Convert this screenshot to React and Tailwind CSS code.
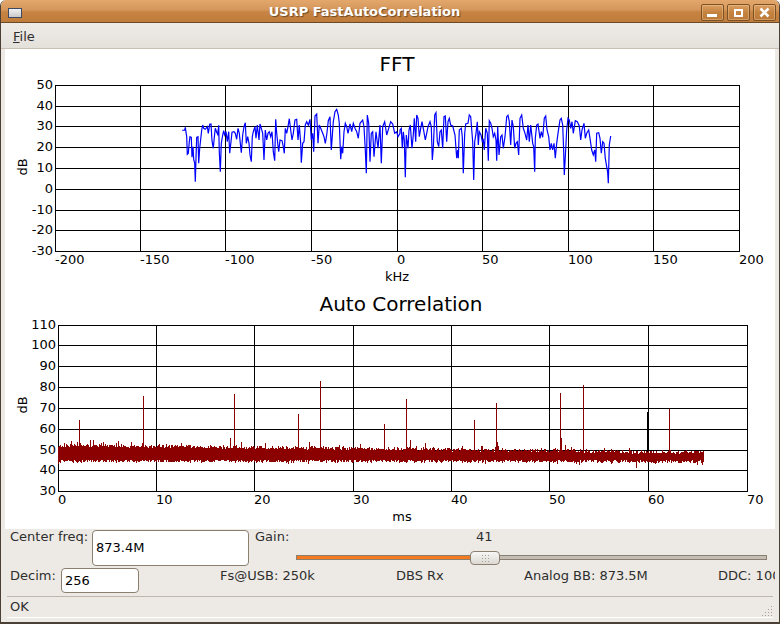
import React from "react";

// traced from the reference, in 3x crop coordinates
const fftA = [[37,91],[44,90],[46,82],[50,110],[52,163],[55,160],[58,125],[60,110],[64,112],[66,172],[69,140],[71,178],[74,190],[76,245],[78,175],[80,112],[84,110],[86,190],[89,145],[92,118],[95,90],[98,75],[101,85],[106,88],[112,80],[115,100],[119,73],[123,72],[126,122],[130,145],[133,112],[136,85],[140,97],[143,103],[146,76],[148,156],[151,215],[154,130],[158,105],[161,92],[164,105],[168,95],[172,125],[176,95],[179,160],[183,125],[186,97],[192,95],[196,100],[200,118],[204,85],[208,100],[211,130],[214,158],[218,105],[222,80],[226,68],[229,130],[233,110],[237,130],[240,165],[244,185],[247,110],[250,95],[255,80],[258,115],[262,75],[267,120],[270,72],[274,85],[278,100],[282,180],[286,90],[290,120],[294,100],[298,95],[302,110],[306,95],[310,155],[314,182],[317,58],[320,100],[323,130],[326,155],[330,120],[336,122],[340,140],[343,160],[346,85],[350,100],[354,80],[358,56],[362,90],[366,120],[370,100],[375,60],[380,58],[384,120],[388,75],[392,130],[394,188],[398,130],[402,125],[406,75],[410,65],[415,75],[420,58],[424,120],[428,100],[431,155],[435,48],[440,42],[444,130],[448,75],[452,85],[458,100],[462,110],[466,130],[470,105],[475,62],[480,50],[484,150],[490,65],[495,35],[500,28],[505,45],[508,70],[512,178],[515,140],[518,160],[522,95],[526,70],[530,80],[534,100],[540,72],[545,95],[550,70],[555,85],[560,95],[565,115],[570,70],[578,60],[582,80],[586,150],[589,220],[592,45],[596,70],[600,185],[604,100],[608,95],[612,170],[618,95],[624,145],[630,75],[634,190],[638,80],[644,65],[650,105],[656,85],[662,65],[668,72],[674,100],[680,95],[684,110],[690,100]];
const fftB = [[0,90],[4,85],[7,145],[10,95],[13,120],[16,232],[19,105],[24,145],[27,90],[31,75],[36,145],[40,105],[43,55],[47,125],[50,45],[54,55],[58,110],[62,85],[66,65],[70,85],[76,120],[80,100],[84,80],[90,65],[94,80],[97,180],[100,145],[104,45],[108,38],[112,125],[116,140],[120,95],[124,90],[128,145],[132,50],[136,48],[140,125],[144,65],[148,55],[152,75],[158,78],[165,105],[170,175],[173,150],[175,175],[178,90],[184,85],[187,110],[190,220],[194,100],[197,72],[204,70],[208,45],[212,50],[216,100],[218,125],[221,240],[224,125],[228,100],[232,65],[235,135],[238,95],[243,105],[247,125],[250,120],[253,150],[257,85],[262,100],[265,182],[268,62],[272,70],[276,85],[280,110],[284,100],[288,120],[290,182],[293,80],[297,165],[302,110],[306,105],[310,145],[315,110],[320,50],[324,46],[328,65],[332,135],[336,60],[340,80],[344,145],[348,130],[352,125],[356,165],[360,55],[365,45],[370,85],[375,100],[380,120],[384,75],[388,125],[392,75],[398,130],[401,140],[404,215],[406,115],[410,75],[414,72],[420,115],[424,95],[428,112],[433,55],[437,48],[441,90],[446,110],[450,150],[454,130],[458,150],[462,130],[466,175],[470,130],[474,100],[480,60],[484,55],[488,75],[491,155],[493,225],[496,170],[500,90],[504,55],[508,60],[512,85],[516,65],[520,100],[526,62],[532,65],[538,78],[542,120],[546,90],[552,70],[556,115],[560,100],[566,90],[570,115],[575,150],[580,165],[584,150],[587,185],[590,100],[596,98],[600,115],[604,160],[608,125],[612,130],[616,175],[620,200],[623,218],[625,250],[628,135],[632,108]];

const fftPoints = [
  ...fftA.map(([x, y]) => `${(170 + x / 3).toFixed(1)},${(100 + y / 3).toFixed(1)}`),
  ...fftB.map(([x, y]) => `${(400 + x / 3).toFixed(1)},${(100 + y / 3).toFixed(1)}`),
].join(" ");

const spikes = [[79.5,420],[143.5,396],[230.5,438],[234.5,394],[298.5,414],[320.5,381],[384.5,424],[406.5,399],[410.5,440],[425.5,443],[474.5,420],[496.5,403],[497.5,442],[560.5,393],[561.5,438],[565.5,445],[583.5,385],[669.5,409]];

function noisePath() {
  let seed = 12345;
  const rnd = () => {
    seed = (seed * 16807) % 2147483647;
    return seed / 2147483647;
  };
  let d = "";
  for (let x = 58.5; x < 704; x += 1) {
    const t = (x - 58) / 646;
    const topBase = 444.5 + 7 * t;
    const botBase = 459.5 + 0.5 * t;
    let top = topBase - rnd() * 1.5 + rnd() * 3;
    let bot = botBase + rnd() * 3;
    if (rnd() < 0.15) top -= rnd() * (5 - 2 * t);
    if (rnd() < 0.08) bot += rnd() * 2;
    d += `M${x} ${top.toFixed(1)}V${bot.toFixed(1)}`;
  }
  return d + "M636.5 460V468";
}

const fftX = [55, 140, 225, 311, 397, 482, 568, 653, 739];
const fftXLabels = ["-200", "-150", "-100", "-50", "0", "50", "100", "150", "200"];
const fftY = [85, 106, 126, 147, 168, 189, 210, 230, 251];
const fftYLabels = ["50", "40", "30", "20", "10", "0", "-10", "-20", "-30"];

const acX = [58, 156, 254, 353, 451, 549, 648, 747];
const acXLabels = ["0", "10", "20", "30", "40", "50", "60", "70"];
const acY = [325, 345, 366, 387, 408, 429, 450, 470, 491];
const acYLabels = ["110", "100", "90", "80", "70", "60", "50", "40", "30"];

function Plot({ viewBox, title, titleX, titleY, xs, ys, xLabels, yLabels, xLabelY, xName, xNameX, xNameY, dbY, children }) {
  const [x0, x1] = [xs[0], xs[xs.length - 1]];
  const [y0, y1] = [ys[0], ys[ys.length - 1]];
  return (
    <svg viewBox={viewBox} className="block w-[770px] h-[240px]" style={{ fontFamily: "'DejaVu Sans', sans-serif" }}>
      <text x={titleX} y={titleY} textAnchor="middle" fontSize="20" fill="#000">{title}</text>
      <g stroke="#000" strokeWidth="1" shapeRendering="crispEdges">
        {xs.map((x) => <line key={x} x1={x + 0.5} x2={x + 0.5} y1={y0} y2={y1} />)}
        {ys.map((y) => <line key={y} x1={x0} x2={x1 + 1} y1={y + 0.5} y2={y + 0.5} />)}
      </g>
      {children}
      <g fontSize="13" fill="#000">
        {ys.map((y, i) => <text key={y} x={x0 - 2} y={y + 4} textAnchor="end">{yLabels[i]}</text>)}
        {xs.map((x, i) => <text key={x} x={x} y={xLabelY}>{xLabels[i]}</text>)}
        <text x={xNameX} y={xNameY} textAnchor="middle">{xName}</text>
        <text x={27} y={dbY} textAnchor="middle" transform={`rotate(-90 27 ${dbY})`}>dB</text>
      </g>
    </svg>
  );
}

function WinButton({ children }) {
  return (
    <div className="w-[23px] h-[17px] flex items-center justify-center rounded-[2px] border border-[#7d5126] shadow-[inset_0_0_0_1px_rgba(255,220,170,0.35)] bg-[linear-gradient(#dc9f63,#c58340_50%,#bb7a3a)]">
      {children}
    </div>
  );
}

export default function App() {
  return (
    <div className="w-[780px] h-[624px] flex flex-col overflow-hidden rounded-t-[6px] bg-[#edeae5] border-b-2 border-x border-[#4a4036] text-[13px] text-[#2e2e2e] font-['DejaVu_Sans',sans-serif]">
      <div className="h-[23px] shrink-0 flex items-center justify-between pl-[7px] pr-[3px] border-b border-[#6b4a28] bg-[linear-gradient(#e3a76c,#d4965a_45%,#c68341_55%,#c07c3c)]">
        <div className="w-[14px] h-[10px] mt-[3px] border border-[#3d4a66] bg-[linear-gradient(#f2f2f2,#c9c9c9)]"></div>
        <div className="text-[13px] font-bold text-white mt-[1px] [text-shadow:1px_1px_1px_#6b4a28] ml-[6px]">USRP FastAutoCorrelation</div>
        <div className="flex gap-[3px] mt-[3px]">
          <WinButton>
            <div className="w-[10px] h-[3px] mt-[5px] bg-white"></div>
          </WinButton>
          <WinButton>
            <div className="w-[9px] h-[8px] border-2 border-white"></div>
          </WinButton>
          <WinButton>
            <svg width="11" height="11" viewBox="0 0 11 11">
              <path d="M1.5 1.5L9.5 9.5M9.5 1.5L1.5 9.5" stroke="#fff" strokeWidth="2.6" />
            </svg>
          </WinButton>
        </div>
      </div>

      <div className="h-[26px] shrink-0 flex items-center pl-[12px] pt-[2px] border-b border-[#c9bfb2] bg-[linear-gradient(#efece8,#e4e0da)]">
        <span><span className="underline">F</span>ile</span>
      </div>

      <div className="mx-[4px] h-[480px] shrink-0 bg-white">
        <Plot
          viewBox="5 49 770 240"
          title="FFT"
          titleX={397}
          titleY={71}
          xs={fftX}
          ys={fftY}
          xLabels={fftXLabels}
          yLabels={fftYLabels}
          xLabelY={264}
          xName="kHz"
          xNameX={397}
          xNameY={281}
          dbY={167}
        >
          <polyline points={fftPoints} fill="none" stroke="#0000ff" strokeWidth="1.2" />
        </Plot>
        <Plot
          viewBox="5 289 770 240"
          title="Auto Correlation"
          titleX={401}
          titleY={311}
          xs={acX}
          ys={acY}
          xLabels={acXLabels}
          yLabels={acYLabels}
          xLabelY={504}
          xName="ms"
          xNameX={402}
          xNameY={521}
          dbY={405}
        >
          <g shapeRendering="crispEdges" strokeWidth="1" fill="none">
            <path d={noisePath()} stroke="#8b0000" />
            {spikes.map(([x, y]) => <line key={x} x1={x} x2={x} y1={y} y2={455} stroke="#8b0000" />)}
            <line x1={647.5} x2={647.5} y1={412} y2={452} stroke="#000" />
          </g>
        </Plot>
      </div>

      <div className="h-[38px] shrink-0 flex pl-[9px] pt-[1px] leading-[14px]">
        <div className="w-[82px]">Center freq:</div>
        <div className="w-[157px] h-[36px] flex items-center pl-[3px] rounded-[4px] border border-[#8b7f70] bg-white text-black">873.4M</div>
        <div className="ml-[6px] w-[41px]">Gain:</div>
        <div className="w-[471px] flex flex-col">
          <div className="h-[18px] pl-[180px]">41</div>
          <div className="relative h-[5px] mt-[7px] border border-[#8b7f70] bg-[#c4bdb3]">
            <div className="h-full w-[174px] bg-[#f47b20]"></div>
            <div className="absolute left-[173px] top-[-5px] w-[30px] h-[14px] flex items-center justify-center rounded-[4px] border border-[#8b7f70] bg-[linear-gradient(#f8f7f5,#dcd8d2)]">
              <div className="w-[9px] h-[9px] bg-[radial-gradient(#a8a196_1px,transparent_1px)] bg-[length:3px_3px]"></div>
            </div>
          </div>
        </div>
      </div>

      <div className="h-[29px] shrink-0 flex items-start pl-[9px] pt-[1px] overflow-hidden whitespace-nowrap mr-[4px] leading-[15px]">
        <div className="w-[51px] shrink-0">Decim:</div>
        <div className="w-[78px] h-[25px] shrink-0 flex items-center pl-[3px] rounded-[4px] border border-[#8b7f70] bg-white text-black">256</div>
        <div className="ml-[81px] w-[176px] shrink-0">Fs@USB: 250k</div>
        <div className="w-[128px] shrink-0">DBS Rx</div>
        <div className="w-[194px] shrink-0">Analog BB: 873.5M</div>
        <div className="shrink-0">DDC: 100</div>
      </div>

      <div className="relative mx-[6px] h-[22px] shrink-0 flex items-center pl-[3px] border-t border-[#bdb7ae] border-b border-b-white">
        OK
        <svg className="absolute right-[-1px] bottom-[0px]" width="12" height="12" viewBox="0 0 12 12" fill="#a8a196">
          <rect x="9" y="1" width="1" height="1" /><rect x="9" y="4" width="1" height="1" /><rect x="6" y="4" width="1" height="1" />
          <rect x="9" y="7" width="1" height="1" /><rect x="6" y="7" width="1" height="1" /><rect x="3" y="7" width="1" height="1" />
          <rect x="9" y="10" width="1" height="1" /><rect x="6" y="10" width="1" height="1" /><rect x="3" y="10" width="1" height="1" /><rect x="0" y="10" width="1" height="1" />
        </svg>
      </div>
    </div>
  );
}
